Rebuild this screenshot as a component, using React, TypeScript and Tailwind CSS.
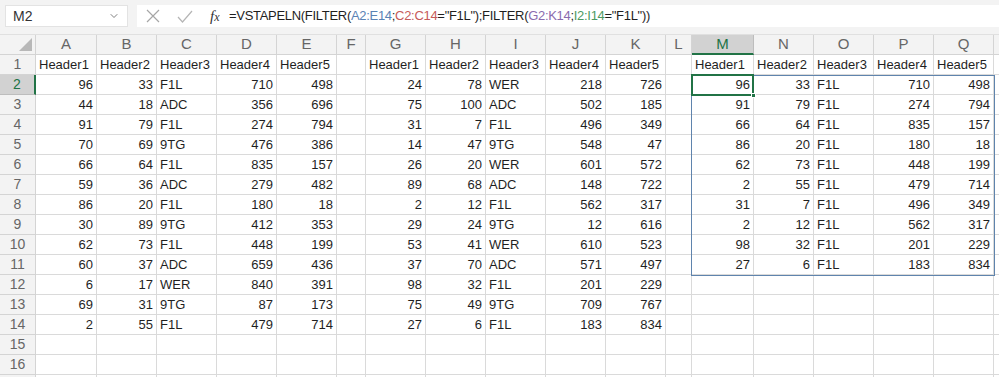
import React from 'react';
import { ChevronDown } from 'lucide-react';

type Cell = string | number | null;

const left: Cell[][] = [
  [96, 33, 'F1L', 710, 498],
  [44, 18, 'ADC', 356, 696],
  [91, 79, 'F1L', 274, 794],
  [70, 69, '9TG', 476, 386],
  [66, 64, 'F1L', 835, 157],
  [59, 36, 'ADC', 279, 482],
  [86, 20, 'F1L', 180, 18],
  [30, 89, '9TG', 412, 353],
  [62, 73, 'F1L', 448, 199],
  [60, 37, 'ADC', 659, 436],
  [6, 17, 'WER', 840, 391],
  [69, 31, '9TG', 87, 173],
  [2, 55, 'F1L', 479, 714],
];

const middle: Cell[][] = [
  [24, 78, 'WER', 218, 726],
  [75, 100, 'ADC', 502, 185],
  [31, 7, 'F1L', 496, 349],
  [14, 47, '9TG', 548, 47],
  [26, 20, 'WER', 601, 572],
  [89, 68, 'ADC', 148, 722],
  [2, 12, 'F1L', 562, 317],
  [29, 24, '9TG', 12, 616],
  [53, 41, 'WER', 610, 523],
  [37, 70, 'ADC', 571, 497],
  [98, 32, 'F1L', 201, 229],
  [75, 49, '9TG', 709, 767],
  [27, 6, 'F1L', 183, 834],
];

// VSTAPELN(FILTER(A2:E14;C="F1L");FILTER(G2:K14;I="F1L"))
const spill = left.filter((r) => r[2] === 'F1L').concat(middle.filter((r) => r[2] === 'F1L'));

const headers: Cell[] = ['Header1', 'Header2', 'Header3', 'Header4', 'Header5'];
const empty: Cell[] = [null, null, null, null, null];

const columns = ['A', 'B', 'C', 'D', 'E', 'F', 'G', 'H', 'I', 'J', 'K', 'L', 'M', 'N', 'O', 'P', 'Q', ''];

function buildRow(i: number): Cell[] {
  if (i === 0) return [...headers, null, ...headers, null, ...headers, null];
  const a = left[i - 1] ?? empty;
  const g = middle[i - 1] ?? empty;
  const m = spill[i - 1] ?? empty;
  return [...a, null, ...g, null, ...m, null];
}

const rows = Array.from({ length: 16 }, (_, i) => buildRow(i));

const gridCols =
  'grid grid-cols-[36px_61px_60px_60px_60px_60px_29px_60px_60px_60px_60px_60px_26px_62px_60px_60px_60px_60px_1fr]';

const App: React.FC = () => {
  return (
    <div className="w-[999px] h-[377px] overflow-hidden bg-white font-['Liberation_Sans',Arial,sans-serif] text-[#1f1f1f]">
      {/* Formula bar */}
      <div className="h-[35px] bg-[#f3f3f3] flex items-start pt-[5px] pl-[5px] border-b border-[#e0e0e0]">
        <div className="w-[123px] h-[22px] bg-white border border-[#e3e3e3] flex items-center justify-between px-[7px] text-[14px] text-[#333]">
          <span>M2</span>
          <ChevronDown className="w-3 h-3 text-[#555]" strokeWidth={1.5} />
        </div>
        <div className="ml-[9px] flex-1 h-[22px] bg-white flex items-center">
          <div className="w-[85px] flex items-center gap-[17px] pl-[9px]">
            <svg width="14" height="14" viewBox="0 0 14 14" fill="none" stroke="#a6a6a6" strokeWidth="1.2">
              <path d="M1 1L13 13M13 1L1 13" />
            </svg>
            <svg width="16" height="13" viewBox="0 0 16 13" fill="none" stroke="#b5b5b5" strokeWidth="1.2">
              <path d="M1 7L5.5 12L15 1" />
            </svg>
            <span className="font-['Liberation_Serif',serif] italic text-[15px] text-[#333] leading-none">
              f<span className="text-[12px]">x</span>
            </span>
          </div>
          <div className="pl-[7px] text-[13px] tracking-[-0.3px] whitespace-nowrap">
            =VSTAPELN(FILTER(<span className="text-[#5b83b5]">A2:E14</span>;
            <span className="text-[#c65a5a]">C2:C14</span>="F1L");FILTER(
            <span className="text-[#8a6bae]">G2:K14</span>;
            <span className="text-[#4d9a62]">I2:I14</span>="F1L"))
          </div>
        </div>
      </div>

      {/* Sheet */}
      <div className="relative">
        <div className={gridCols}>
          {/* column headers */}
          <div className="h-[20px] bg-[#f3f3f3] border-r border-b border-[#d4d4d4] relative">
            <div className="absolute right-[3px] bottom-[3px] w-0 h-0 border-l-[13px] border-l-transparent border-b-[13px] border-b-[#b8b8b8]" />
          </div>
          {columns.map((c, idx) =>
            c === 'M' ? (
              <div
                key={idx}
                className="h-[20px] bg-[#d2d2d2] border-r border-[#bdbdbd] border-b-2 border-b-[#217346] text-[#217346] text-[15px] flex items-center justify-center"
              >
                {c}
              </div>
            ) : (
              <div
                key={idx}
                className="h-[20px] bg-[#f3f3f3] border-r border-b border-[#d4d4d4] text-[#666] text-[15px] flex items-center justify-center"
              >
                {c}
              </div>
            )
          )}

          {rows.map((row, r) => (
            <React.Fragment key={r}>
              {r === 1 ? (
                <div className="h-[20px] bg-[#d2d2d2] border-r-2 border-r-[#217346] border-b border-[#bdbdbd] text-[#217346] text-[14px] flex items-center justify-center">
                  {r + 1}
                </div>
              ) : (
                <div className="h-[20px] bg-[#f3f3f3] border-r border-b border-[#d4d4d4] text-[#666] text-[14px] flex items-center justify-center">
                  {r + 1}
                </div>
              )}
              {row.map((v, c) => (
                <div
                  key={c}
                  className={`h-[20px] border-r border-b border-[#dadada] text-[13px] flex items-center px-[3px] whitespace-nowrap ${
                    typeof v === 'number' ? 'justify-end' : 'justify-start'
                  }`}
                >
                  {v}
                </div>
              ))}
            </React.Fragment>
          ))}
          {/* partial row 17 */}
          <div className="h-[2px] bg-[#f3f3f3] border-r border-[#d4d4d4]" />
          {columns.map((_, idx) => (
            <div key={idx} className="h-[2px] border-r border-[#dadada]" />
          ))}
        </div>

        {/* spill range outline M2:Q11 */}
        <div className="absolute left-[691px] top-[40px] w-[304px] h-[201px] border border-[#5f84ad] pointer-events-none" />
        {/* active cell M2 */}
        <div className="absolute left-[691px] top-[39px] w-[63px] h-[22px] border-2 border-[#217346] pointer-events-none" />
        <div className="absolute left-[751px] top-[58px] w-[5px] h-[5px] bg-[#217346] border border-white pointer-events-none" />
      </div>
    </div>
  );
};

export default App;
